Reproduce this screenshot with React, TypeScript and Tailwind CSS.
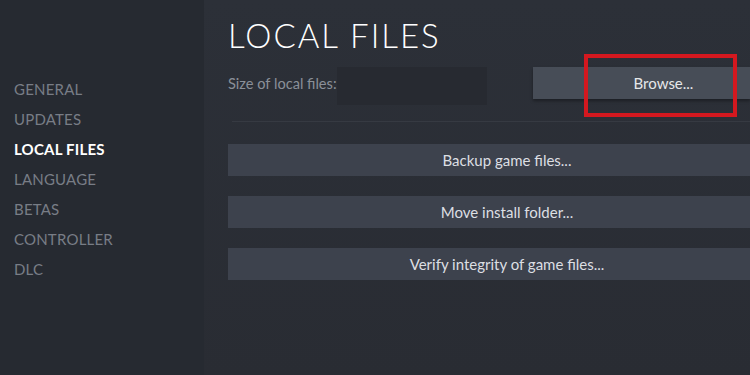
import React from "react";

const nav = ["GENERAL", "UPDATES", "LOCAL FILES", "LANGUAGE", "BETAS", "CONTROLLER", "DLC"];

export default function App() {
  return (
    <div
      className="w-[750px] h-[375px] flex overflow-hidden"
      style={{ fontFamily: "Lato, 'Open Sans', sans-serif" }}
    >
      <div className="w-[204px] h-full bg-[#262a31] flex flex-col pt-[79px] pl-[14px]">
        {nav.map((n) => (
          <div
            key={n}
            className={`h-[30px] leading-[20px] text-[15px] tracking-[0.2px] ${
              n === "LOCAL FILES" ? "text-white font-bold" : "text-[#787d86]"
            }`}
          >
            {n}
          </div>
        ))}
      </div>
      <div className="flex-1 h-full bg-gradient-to-b from-[#2c3038] to-[#292c33] flex flex-col pl-[24px] relative">
        <div className="mt-[15px] h-[40px] leading-[40px] text-[33px] text-white tracking-[2px] font-light">
          LOCAL FILES
        </div>
        <div className="mt-[12px] h-[38px] flex items-center">
          <span className="text-[14.6px] text-[#8a9099] w-[109px] pb-[4px] whitespace-nowrap">Size of local files:</span>
          <div className="w-[150px] h-[38px] bg-[#272a31]" />
          <div className="ml-[46px] flex-1 h-[32px] -mt-[6px] bg-[#474d57] text-[#e6e8ea] text-[15px] flex items-center justify-center pl-[44px] shadow-[0_2px_3px_rgba(0,0,0,0.35)]">
            Browse...
          </div>
        </div>
        <div className="mt-[16px] ml-[4px] h-px bg-[#363a42]" />
        <div className="mt-[22px] flex flex-col gap-[20px]">
          {["Backup game files...", "Move install folder...", "Verify integrity of game files..."].map((t) => (
            <div
              key={t}
              className="h-[32px] bg-[#3d424d] text-[#dcdfe3] text-[15px] flex items-center justify-center pl-[36px]"
            >
              {t}
            </div>
          ))}
        </div>
        <div className="absolute left-[380px] top-[54px] w-[153px] h-[63px] border-[4px] border-[#d4181f]" />
      </div>
    </div>
  );
}
